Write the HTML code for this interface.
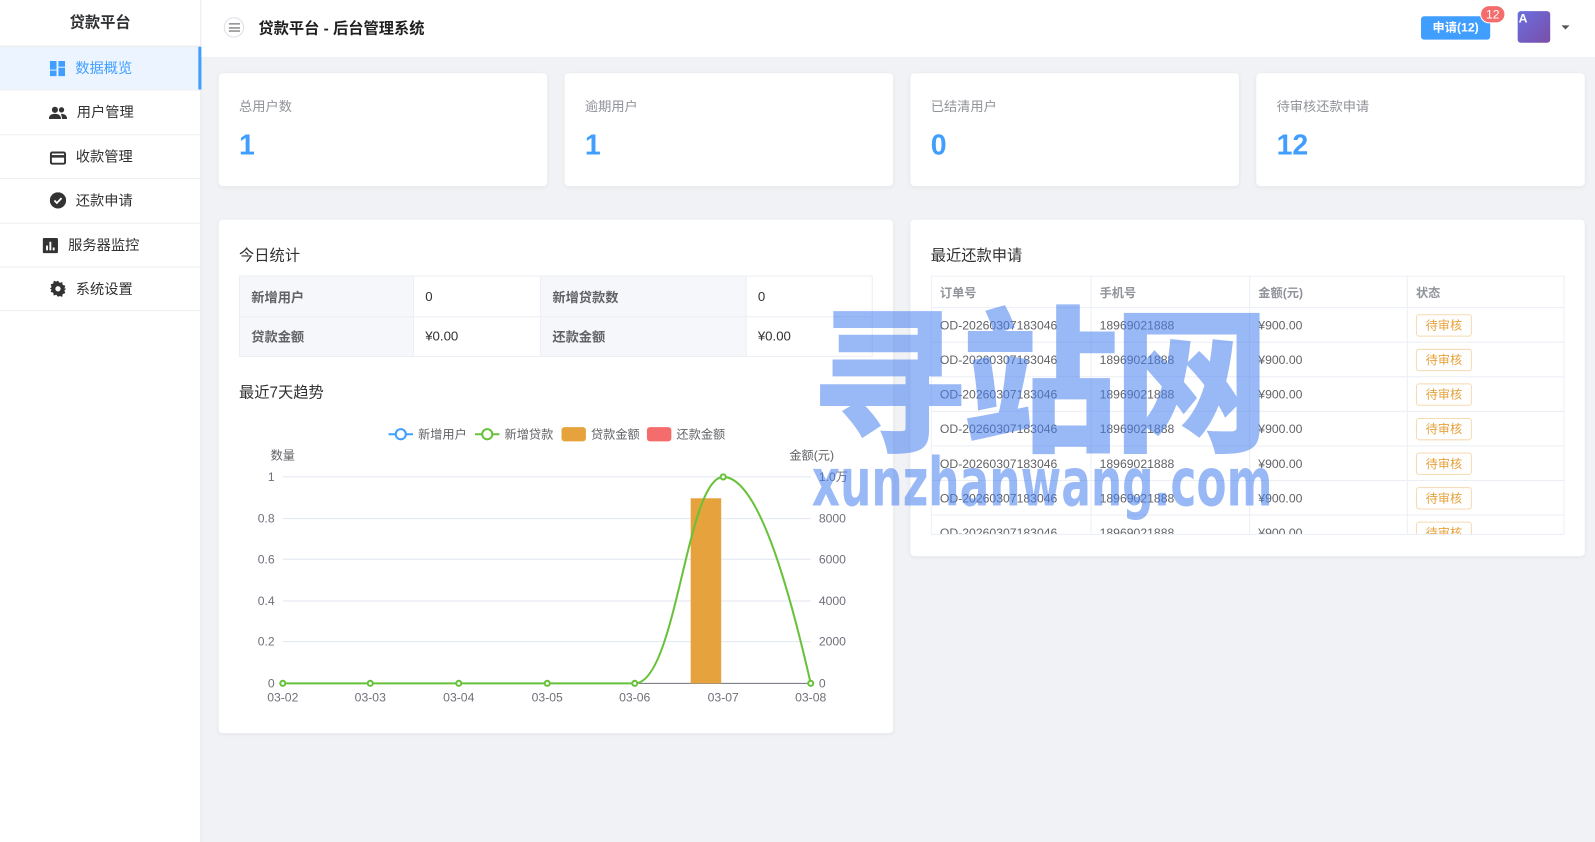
<!DOCTYPE html>
<html><head><meta charset="utf-8">
<style>
*{box-sizing:border-box;margin:0;padding:0}
html,body{width:1595px;height:842px;overflow:hidden;background:#f0f2f5}
body{font-family:"Liberation Sans","Noto Sans CJK SC",sans-serif;color:#303133}
#w{position:absolute;left:0;top:0;width:1568px;height:828px;transform:scale(1.0172,1.0169);transform-origin:0 0;background:#f0f2f5}
.abs{position:absolute}
#side{left:0;top:0;width:198px;height:828px;background:#fff;border-right:1px solid #e6e6e6}
#side .t{height:46px;line-height:46px;text-align:center;font-weight:bold;font-size:15px;border-bottom:1px solid #e6e6e6}
#side .it{height:43.4px;line-height:43px;text-align:center;font-size:14px;border-bottom:1px solid #eee;color:#303133;position:relative;padding-right:18px}
#side .it.a{background:#ecf5ff;color:#409eff}
#side .it.a:after{content:"";position:absolute;right:-1px;top:0;width:3px;height:100%;background:#409eff}
#side .it svg{vertical-align:-3px;margin-right:10px}
#hdr{left:198px;top:0;width:1370px;height:56px;background:#fff}
.card{position:absolute;background:#fff;border-radius:4px;box-shadow:0 1px 4px rgba(0,0,0,.06)}
.lab{position:absolute;left:20px;top:22px;font-size:13px;color:#909399}
.num{position:absolute;left:20px;top:55px;font-size:28px;font-weight:bold;color:#409eff}
.ct{position:absolute;left:20px;font-size:15px;color:#303133}
table{border-collapse:collapse;position:absolute}
td,th{border:1px solid #ebeef5}
.st td{height:39.5px;font-size:13px;padding-left:11px}
.st td.l{background:#f5f7fa;font-weight:bold;color:#606266}
.rt th{height:31px;font-size:12px;color:#909399;text-align:left;padding-left:8px;font-weight:bold}
.rt td{height:34px;font-size:12px;color:#606266;padding-left:8px}
.tag{display:inline-block;border:1px solid #f5dab1;color:#e6a23c;border-radius:3px;font-size:12px;width:55px;height:22px;line-height:20px;text-align:center;background:#fff}
</style></head><body><div id="w">
<div id="side" class="abs">
<div class="t">贷款平台</div>
<div class="it a"><svg width="15" height="15" viewBox="0 0 16 16"><rect x="0" y="0" width="7" height="9" fill="#409eff"/><rect x="0" y="10" width="7" height="6" fill="#409eff"/><rect x="9" y="0" width="7" height="6" fill="#409eff"/><rect x="9" y="7" width="7" height="9" fill="#409eff"/></svg>数据概览</div>
<div class="it"><svg width="18" height="14" viewBox="0 0 18 14"><circle cx="6" cy="4" r="3" fill="#333"/><circle cx="12.5" cy="4" r="2.6" fill="#333"/><path d="M0 13c0-4 3-5 6-5s6 1 6 5z" fill="#333"/><path d="M12 8c3 0 6 1 6 5h-5c0-2-1-4-1-5z" fill="#333"/></svg>用户管理</div>
<div class="it"><svg width="16" height="13" viewBox="0 0 16 13"><rect x="1" y="1" width="14" height="11" rx="1.5" fill="none" stroke="#333" stroke-width="2"/><rect x="1" y="3.5" width="14" height="2.5" fill="#333"/></svg>收款管理</div>
<div class="it"><svg width="16" height="16" viewBox="0 0 16 16"><circle cx="8" cy="8" r="8" fill="#333"/><path d="M4.5 8.2l2.4 2.4 4.6-4.8" stroke="#fff" stroke-width="1.8" fill="none"/></svg>还款申请</div>
<div class="it"><svg width="15" height="15" viewBox="0 0 16 16"><rect width="16" height="16" rx="1.5" fill="#333"/><rect x="3.5" y="8" width="2" height="5" fill="#fff"/><rect x="7" y="4" width="2" height="9" fill="#fff"/><rect x="10.5" y="10" width="2" height="3" fill="#fff"/></svg>服务器监控</div>
<div class="it"><svg width="16" height="16" viewBox="0 0 16 16"><path d="M8 0l1.6 2.2 2.6-.8.4 2.7 2.6.9-.9 2.6L16 8l-1.7 1.7.9 2.6-2.6.9-.4 2.7-2.6-.8L8 16l-1.6-2.2-2.6.8-.4-2.7-2.6-.9.9-2.6L0 8l1.7-1.7-.9-2.6 2.6-.9.4-2.7 2.6.8z" fill="#333"/><circle cx="8" cy="8" r="2.6" fill="#fff"/></svg>系统设置</div>
</div>
<div id="hdr" class="abs">
<div class="abs" style="left:22px;top:17px;width:20px;height:20px;border:1px solid #dcdfe6;border-radius:50%"><div style="position:absolute;left:4px;top:5px;width:11px;height:8px;border-top:1.5px solid #555;border-bottom:1.5px solid #555"></div><div style="position:absolute;left:4px;top:8.5px;width:11px;height:1.5px;background:#555"></div></div>
<div class="abs" style="left:56px;top:17px;font-size:15px;font-weight:bold;color:#1f1f1f">贷款平台 - 后台管理系统</div>
<div class="abs" style="left:1199px;top:16px;width:68px;height:23px;background:#409eff;border-radius:3px;color:#fff;font-size:12px;font-weight:bold;text-align:center;line-height:23px">申请(12)</div>
<div class="abs" style="left:1257px;top:5px;width:25px;height:18px;background:#f56c6c;border-radius:9px;border:1px solid #fff;color:#fff;font-size:12px;text-align:center;line-height:16px">12</div>
<div class="abs" style="left:1294px;top:11px;width:32px;height:31px;border-radius:3px;background:linear-gradient(135deg,#6a6ee0,#7a4fa8);color:#fff;font-size:12px;font-weight:bold;padding-left:1px;line-height:14px">A</div>
<div class="abs" style="left:1337px;top:25px;border:4px solid transparent;border-top:4px solid #555;border-bottom:0"></div>
</div>

<div class="card" style="left:215px;top:72px;width:323px;height:111px"><div class="lab">总用户数</div><div class="num">1</div></div>
<div class="card" style="left:555px;top:72px;width:323px;height:111px"><div class="lab">逾期用户</div><div class="num">1</div></div>
<div class="card" style="left:895px;top:72px;width:323px;height:111px"><div class="lab">已结清用户</div><div class="num">0</div></div>
<div class="card" style="left:1235px;top:72px;width:323px;height:111px"><div class="lab">待审核还款申请</div><div class="num">12</div></div>

<div class="card" style="left:215px;top:216px;width:663px;height:505px">
<div class="ct" style="top:24px">今日统计</div>
<table class="st" style="left:20px;top:55px;width:623px">
<tr><td class="l" style="width:171px">新增用户</td><td style="width:125px">0</td><td class="l" style="width:202px">新增贷款数</td><td>0</td></tr>
<tr><td class="l">贷款金额</td><td>¥0.00</td><td class="l">还款金额</td><td>¥0.00</td></tr>
</table>
<div class="ct" style="top:159px">最近7天趋势</div>
<svg class="abs" style="left:0;top:190px" width="663" height="300" font-family="Liberation Sans,Noto Sans CJK SC,sans-serif">
<g font-size="12" fill="#606266">
<line x1="167" y1="21" x2="191" y2="21" stroke="#409eff" stroke-width="2"/><circle cx="179" cy="21" r="5" fill="#fff" stroke="#409eff" stroke-width="2"/><text x="196" y="25">新增用户</text>
<line x1="252" y1="21" x2="276" y2="21" stroke="#67c23a" stroke-width="2"/><circle cx="264" cy="21" r="5" fill="#fff" stroke="#67c23a" stroke-width="2"/><text x="281" y="25">新增贷款</text>
<rect x="337" y="14" width="24" height="14" rx="3" fill="#e6a23c"/><text x="366" y="25">贷款金额</text>
<rect x="421" y="14" width="24" height="14" rx="3" fill="#f56c6c"/><text x="450" y="25">还款金额</text>
<text x="51" y="46">数量</text><text x="561" y="46">金额(元)</text>
</g>
<g stroke="#e0e6f1" stroke-width="1">
<line x1="63" y1="63" x2="582" y2="63"/><line x1="63" y1="104" x2="582" y2="104"/><line x1="63" y1="144" x2="582" y2="144"/><line x1="63" y1="185" x2="582" y2="185"/><line x1="63" y1="225" x2="582" y2="225"/>
</g>
<line x1="63" y1="266" x2="582" y2="266" stroke="#6e7079"/>
<g font-size="12" fill="#6e7079" text-anchor="end">
<text x="55" y="67">1</text><text x="55" y="108">0.8</text><text x="55" y="148">0.6</text><text x="55" y="189">0.4</text><text x="55" y="229">0.2</text><text x="55" y="270">0</text>
</g>
<g font-size="12" fill="#6e7079">
<text x="590" y="67">1.0万</text><text x="590" y="108">8000</text><text x="590" y="148">6000</text><text x="590" y="189">4000</text><text x="590" y="229">2000</text><text x="590" y="270">0</text>
</g>
<g font-size="12" fill="#6e7079" text-anchor="middle">
<text x="63" y="284">03-02</text><text x="149" y="284">03-03</text><text x="236" y="284">03-04</text><text x="323" y="284">03-05</text><text x="409" y="284">03-06</text><text x="496" y="284">03-07</text><text x="582" y="284">03-08</text>
</g>
<rect x="464" y="84" width="30" height="182" fill="#e6a23c"/>
<path d="M63 266 L409 266 C450 266 460 63 496 63 C530 63 560 170 582 266" fill="none" stroke="#67c23a" stroke-width="2"/>
<g fill="#fff" stroke="#67c23a" stroke-width="2">
<circle cx="63" cy="266" r="2.5"/><circle cx="149" cy="266" r="2.5"/><circle cx="236" cy="266" r="2.5"/><circle cx="323" cy="266" r="2.5"/><circle cx="409" cy="266" r="2.5"/><circle cx="496" cy="63" r="2.5"/><circle cx="582" cy="266" r="2.5"/>
</g>
</svg>
</div>

<div class="card" style="left:895px;top:216px;width:663px;height:331px;overflow:hidden">
<div class="ct" style="top:24px">最近还款申请</div>
<div class="abs" style="left:20px;top:55px;width:623px;height:255px;overflow:hidden;border-bottom:1px solid #ebeef5">
<table class="rt" style="left:0;top:0;width:623px">
<tr><th style="width:157px">订单号</th><th style="width:156px">手机号</th><th style="width:155px">金额(元)</th><th>状态</th></tr>
<tr><td>OD-20260307183046</td><td>18969021888</td><td>¥900.00</td><td><span class="tag">待审核</span></td></tr>
<tr><td>OD-20260307183046</td><td>18969021888</td><td>¥900.00</td><td><span class="tag">待审核</span></td></tr>
<tr><td>OD-20260307183046</td><td>18969021888</td><td>¥900.00</td><td><span class="tag">待审核</span></td></tr>
<tr><td>OD-20260307183046</td><td>18969021888</td><td>¥900.00</td><td><span class="tag">待审核</span></td></tr>
<tr><td>OD-20260307183046</td><td>18969021888</td><td>¥900.00</td><td><span class="tag">待审核</span></td></tr>
<tr><td>OD-20260307183046</td><td>18969021888</td><td>¥900.00</td><td><span class="tag">待审核</span></td></tr>
<tr><td>OD-20260307183046</td><td>18969021888</td><td>¥900.00</td><td><span class="tag">待审核</span></td></tr>
</table></div>
</div>

<div class="abs" style="left:796px;top:280px;width:470px;font-size:155px;line-height:170px;font-weight:900;color:rgba(70,125,238,0.55);font-family:'Noto Sans CJK SC',sans-serif;letter-spacing:-6px;white-space:nowrap">寻站网</div>
<div class="abs" style="left:798px;top:440px;font-size:66px;line-height:70px;font-weight:bold;color:rgba(70,125,238,0.55);white-space:nowrap;transform:scaleX(0.655);transform-origin:0 0;font-family:'DejaVu Sans',sans-serif">xunzhanwang.com</div>
</div></body></html>
